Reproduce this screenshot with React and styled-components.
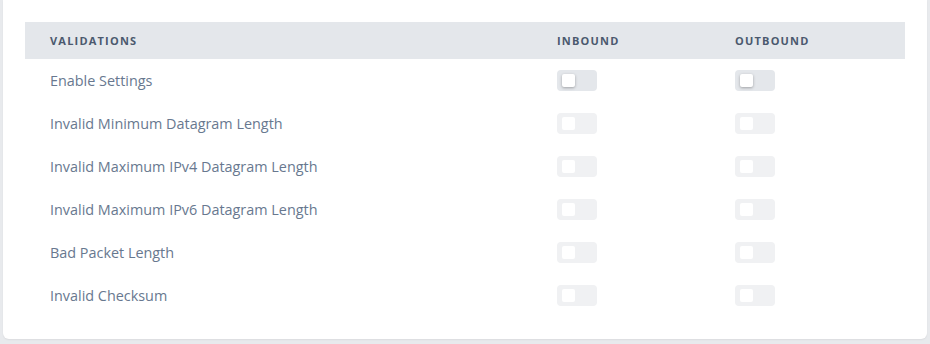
import React from 'react';
import styled, { createGlobalStyle } from 'styled-components';

const GlobalStyle = createGlobalStyle`
  html, body {
    margin: 0;
    padding: 0;
    background: #e8eaed;
  }
  body {
    font-family: 'Open Sans', 'Noto Sans', sans-serif;
  }
`;

const rows = [
  { label: 'Enable Settings', active: true },
  { label: 'Invalid Minimum Datagram Length' },
  { label: 'Invalid Maximum IPv4 Datagram Length' },
  { label: 'Invalid Maximum IPv6 Datagram Length' },
  { label: 'Bad Packet Length' },
  { label: 'Invalid Checksum' },
];

const Toggle = ({ active }) => (
  <Track $active={active}>
    <Knob $active={active} />
  </Track>
);

const App = () => {
  return (
    <>
      <GlobalStyle />
      <Page>
        <Card>
          <Table>
            <HeadRow>
              <HeadCell>Validations</HeadCell>
              <HeadCell>Inbound</HeadCell>
              <HeadCell>Outbound</HeadCell>
            </HeadRow>
            {rows.map((r) => (
              <Row key={r.label}>
                <Label>{r.label}</Label>
                <Cell>
                  <Toggle active={r.active} />
                </Cell>
                <Cell>
                  <Toggle active={r.active} />
                </Cell>
              </Row>
            ))}
          </Table>
        </Card>
      </Page>
    </>
  );
};

const Page = styled.div`
  width: 930px;
  height: 344px;
  padding: 0 3px;
  box-sizing: border-box;
`;

const Card = styled.div`
  background: #fff;
  border-radius: 0 0 6px 6px;
  padding: 22px 22px 22px;
  box-shadow: 0 1px 2px rgba(0, 0, 0, 0.06);
`;

const Table = styled.div`
  display: grid;
  grid-template-columns: 507px 178px 1fr;
`;

const HeadRow = styled.div`
  display: contents;
`;

const HeadCell = styled.div`
  background: #e4e7eb;
  height: 37px;
  display: flex;
  align-items: center;
  padding-left: 25px;
  font-size: 11px;
  font-weight: 700;
  letter-spacing: 1.2px;
  text-transform: uppercase;
  color: #4b596e;
`;

const Row = styled.div`
  display: contents;
`;

const Label = styled.div`
  height: 43px;
  display: flex;
  align-items: center;
  padding-left: 25px;
  padding-bottom: 1px;
  box-sizing: border-box;
  font-size: 14.4px;
  color: #68788f;
`;

const Cell = styled.div`
  height: 43px;
  display: flex;
  align-items: center;
  padding-left: 25px;
`;

const Track = styled.div`
  width: 40px;
  height: 21px;
  border-radius: 4px;
  background: ${(p) => (p.$active ? '#e4e7eb' : '#f0f1f3')};
  display: flex;
  align-items: center;
  padding-left: 5px;
  box-sizing: border-box;
`;

const Knob = styled.div`
  width: 13px;
  height: 13px;
  border-radius: 2px;
  background: #fff;
  box-shadow: ${(p) => (p.$active ? '0 1px 3px rgba(0, 0, 0, 0.3)' : 'none')};
`;

export default App;
